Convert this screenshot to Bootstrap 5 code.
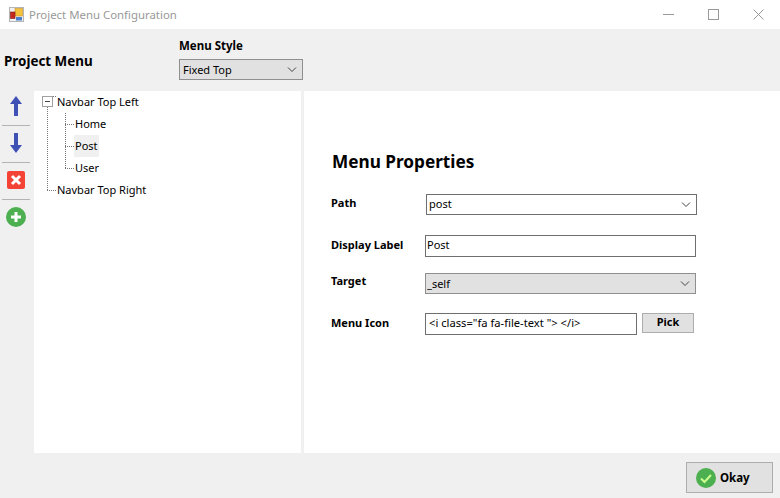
<!DOCTYPE html>
<html lang="en">
<head>
  <meta charset="UTF-8" />
  <title>Project Menu Configuration</title>
  <link href="https://cdn.jsdelivr.net/npm/bootstrap@5.3.3/dist/css/bootstrap.min.css" rel="stylesheet"/>
  <style>
    html, body { height: 100%; overflow: hidden; }
    body { background: #f0f0f0; font-family: "Noto Sans", Tahoma, sans-serif; font-size: 11px; color: #000; }
    .app-window { width: 780px; height: 498px; }

    /* title bar */
    .title-bar { height: 29px; background: #fff; padding-left: 9px; }
    .title-text { font-size: 11.4px; color: #999; margin-left: 5px; }
    .win-btns { margin-left: auto; margin-right: -1px; }
    .win-btn { width: 45px; height: 29px; }

    /* top strip */
    .top-strip { height: 62px; }
    .strip-title { font-size: 13.4px; font-weight: 700; width: 179px; padding: 23px 0 0 4px; line-height: 18px; }
    .style-label { font-size: 11.5px; font-weight: 700; line-height: 16px; padding-top: 9px; margin-bottom: 5px; }

    /* winforms look for inputs */
    .win-select.form-select, .win-input.form-control {
      font-size: 11px; line-height: 14px; color: #000; border-radius: 0; box-shadow: none; min-height: 0;
      font-family: inherit;
    }
    .win-select.form-select {
      padding: 0 20px 0 3px;
      background-image: url("data:image/svg+xml,%3csvg xmlns='http://www.w3.org/2000/svg' viewBox='0 0 10 6'%3e%3cpath fill='none' stroke='%23444' d='M1 .5l4 4 4-4'/%3e%3c/svg%3e");
      background-size: 10px 6px; background-position: right 5px center;
    }
    .select-gray.form-select { background-color: #e1e1e1; border: 1px solid #8f8f8f; }
    .select-white.form-select { background-color: #fff; border: 1px solid #6f6f6f; }
    .win-input.form-control { padding: 0 1px 3px; border: 1px solid #6f6f6f; background: #fff; }

    /* main area */
    .main-area { height: 362px; }
    .tool-rail { width: 34px; }
    .rail-item { height: 37px; width: 28px; margin-left: 2px; border-bottom: 1px solid #b4b4b4; padding-bottom: 2px; }
    .rail-item.first { height: 35px; padding-bottom: 4px; }
    .rail-item.last { height: 35px; border-bottom: 0; padding-bottom: 2px; }
    .tree-pane { width: 267px; background: #fff; padding: 0 0 0 4px; }
    .splitter { width: 3px; }
    .props-pane { width: 476px; background: #fff; padding: 59px 0 0 27px; }

    /* tree */
    .tree-row { height: 22px; line-height: 22px; font-size: 11px; margin: 0; padding: 0; }
    .tree-cell { width: 18px; height: 22px; flex: none; background-repeat: no-repeat; }
    .line-v { background-image: repeating-linear-gradient(to bottom, #777 0 1px, transparent 1px 2px); background-size: 1px 100%; background-position: 9px 0; }
    .line-l {
      background-image: repeating-linear-gradient(to bottom, #777 0 1px, transparent 1px 2px), repeating-linear-gradient(to right, #777 0 1px, transparent 1px 2px);
      background-size: 1px 50%, 9px 1px; background-position: 9px 0, 9px 11px;
    }
    .line-t {
      background-image: repeating-linear-gradient(to bottom, #777 0 1px, transparent 1px 2px), repeating-linear-gradient(to right, #777 0 1px, transparent 1px 2px);
      background-size: 1px 100%, 9px 1px; background-position: 9px 0, 9px 11px;
    }
    .tree-text { padding: 0 1px; margin-left: 0; }
    .tree-text.picked { background: #f0f0f0; }

    /* properties */
    .props-title { font-size: 17.2px; font-weight: 700; line-height: 24px; margin: 0 0 20px 1px; }
    .prop-label { width: 94px; font-weight: 700; font-size: 11px; flex: none; padding-bottom: 2px; }
    .row-path { height: 21px; margin-bottom: 20px; }
    .row-path .prop-label { width: 95px; padding-bottom: 3px; }
    .row-path .form-select { width: 271px; height: 21px; padding-left: 2px; padding-bottom: 2px; }
    .row-label { height: 22px; margin-bottom: 16px; }
    .row-label .form-control { width: 271px; height: 22px; }
    .row-target { height: 21px; margin-bottom: 19px; }
    .row-target .prop-label { padding-bottom: 4px; }
    .row-target .form-select { width: 271px; height: 21px; padding-left: 1px; }
    .row-icon { height: 22px; }
    .row-icon .form-control { width: 212px; height: 22px; font-size: 11.2px; padding-left: 3px; }
    .pick-btn.btn { width: 52px; height: 20px; margin: 0 0 2px 5px; padding: 0 0 1px; font-size: 11px; font-weight: 700; color: #000; background: #e1e1e1; border: 1px solid #adadad; border-radius: 0; }

    /* footer */
    .footer-bar { height: 45px; padding: 9px 7px 0 0; }
    .okay-btn.btn { width: 87px; height: 31px; padding: 0 0 0 9px; font-size: 11.5px; font-weight: 700; color: #000; background: #e1e1e1; border: 1px solid #adadad; border-radius: 0; }
  </style>
</head>
<body>
  <div class="app-window d-flex flex-column">
    <!-- title bar -->
    <div class="title-bar d-flex align-items-center">
      <svg width="15" height="15" viewBox="0 0 15 15">
        <rect x="0.5" y="0.5" width="14" height="14" fill="#f1f1f1" stroke="#b5b5b5"/>
        <rect x="6" y="1.5" width="7.5" height="7.5" fill="#f5c13a" stroke="#c8952a" stroke-width="0.6"/>
        <rect x="1.5" y="5" width="4.5" height="6.5" fill="#c8281e" stroke="#7d1a14" stroke-width="0.6"/>
        <rect x="7" y="10" width="6" height="3.5" fill="#4a7fd0"/>
      </svg>
      <span class="title-text">Project Menu Configuration</span>
      <div class="win-btns d-flex">
        <div class="win-btn d-flex align-items-center justify-content-center">
          <svg width="11" height="11"><path d="M0 5.5h11" stroke="#999" fill="none"/></svg>
        </div>
        <div class="win-btn d-flex align-items-center justify-content-center">
          <svg width="11" height="11"><rect x=".5" y=".5" width="10" height="10" stroke="#999" fill="none"/></svg>
        </div>
        <div class="win-btn d-flex align-items-center justify-content-center">
          <svg width="11" height="11"><path d="M.5.5l10 10M10.5.5l-10 10" stroke="#999" fill="none"/></svg>
        </div>
      </div>
    </div>

    <!-- top strip -->
    <div class="top-strip d-flex">
      <div class="strip-title">Project Menu</div>
      <div>
        <div class="style-label">Menu Style</div>
        <select class="form-select win-select select-gray" style="width:124px;height:21px"><option>Fixed Top</option></select>
      </div>
    </div>

    <!-- main area -->
    <div class="main-area d-flex">
      <div class="tool-rail">
        <div class="rail-item first d-flex align-items-center justify-content-center">
          <svg width="14" height="20" viewBox="0 0 14 20"><path d="M7 0l6 8H9v12H5V8H1z" fill="#3f51b5"/></svg>
        </div>
        <div class="rail-item d-flex align-items-center justify-content-center">
          <svg width="14" height="20" viewBox="0 0 14 20"><path d="M7 20l6-8H9V0H5v12H1z" fill="#3f51b5"/></svg>
        </div>
        <div class="rail-item d-flex align-items-center justify-content-center">
          <svg width="18" height="18" viewBox="0 0 18 18"><rect width="18" height="18" rx="2" fill="#f44336"/><path d="M5 5l8 8M13 5l-8 8" stroke="#fff" stroke-width="3"/></svg>
        </div>
        <div class="rail-item last d-flex align-items-center justify-content-center">
          <svg width="20" height="20" viewBox="0 0 20 20"><circle cx="10" cy="10" r="10" fill="#4caf50"/><path d="M10 5v10M5 10h10" stroke="#fff" stroke-width="3"/></svg>
        </div>
      </div>

      <div class="tree-pane">
        <div class="tree-row d-flex">
          <div class="tree-cell d-flex align-items-center">
            <svg width="18" height="22" viewBox="0 0 18 22">
              <path d="M15 5.5h3M9.5 16v6" stroke="#777" stroke-dasharray="1 1" fill="none"/>
              <rect x="4.5" y="5.5" width="10" height="10" fill="#fff" stroke="#a0a0a0"/>
              <path d="M7 10.5h5" stroke="#444"/>
            </svg>
          </div>
          <span class="tree-text">Navbar Top Left</span>
        </div>
        <div class="tree-row d-flex">
          <div class="tree-cell line-v"></div>
          <div class="tree-cell line-t"></div>
          <span class="tree-text">Home</span>
        </div>
        <div class="tree-row d-flex">
          <div class="tree-cell line-v"></div>
          <div class="tree-cell line-t"></div>
          <span class="tree-text picked">Post</span>
        </div>
        <div class="tree-row d-flex">
          <div class="tree-cell line-v"></div>
          <div class="tree-cell line-l"></div>
          <span class="tree-text">User</span>
        </div>
        <div class="tree-row d-flex">
          <div class="tree-cell line-l"></div>
          <span class="tree-text">Navbar Top Right</span>
        </div>
      </div>

      <div class="splitter"></div>

      <div class="props-pane">
        <h2 class="props-title">Menu Properties</h2>
        <div class="row-path d-flex align-items-center">
          <div class="prop-label">Path</div>
          <select class="form-select win-select select-white"><option>post</option></select>
        </div>
        <div class="row-label d-flex align-items-center">
          <div class="prop-label">Display Label</div>
          <input class="form-control win-input" value="Post" />
        </div>
        <div class="row-target d-flex align-items-center">
          <div class="prop-label">Target</div>
          <select class="form-select win-select select-gray"><option>_self</option></select>
        </div>
        <div class="row-icon d-flex align-items-center">
          <div class="prop-label">Menu Icon</div>
          <input class="form-control win-input" value='&lt;i class="fa fa-file-text "&gt; &lt;/i&gt;' />
          <button class="btn pick-btn" type="button">Pick</button>
        </div>
      </div>
    </div>

    <!-- footer -->
    <div class="footer-bar d-flex justify-content-end align-items-start">
      <button class="btn okay-btn d-flex align-items-center gap-1" type="button">
        <svg width="20" height="20" viewBox="0 0 20 20"><circle cx="10" cy="10" r="10" fill="#4caf50"/><path d="M5 10.5l3.5 3.5 6.5-7" stroke="#ccff90" stroke-width="2" fill="none"/></svg>
        Okay
      </button>
    </div>
  </div>
</body>
</html>
